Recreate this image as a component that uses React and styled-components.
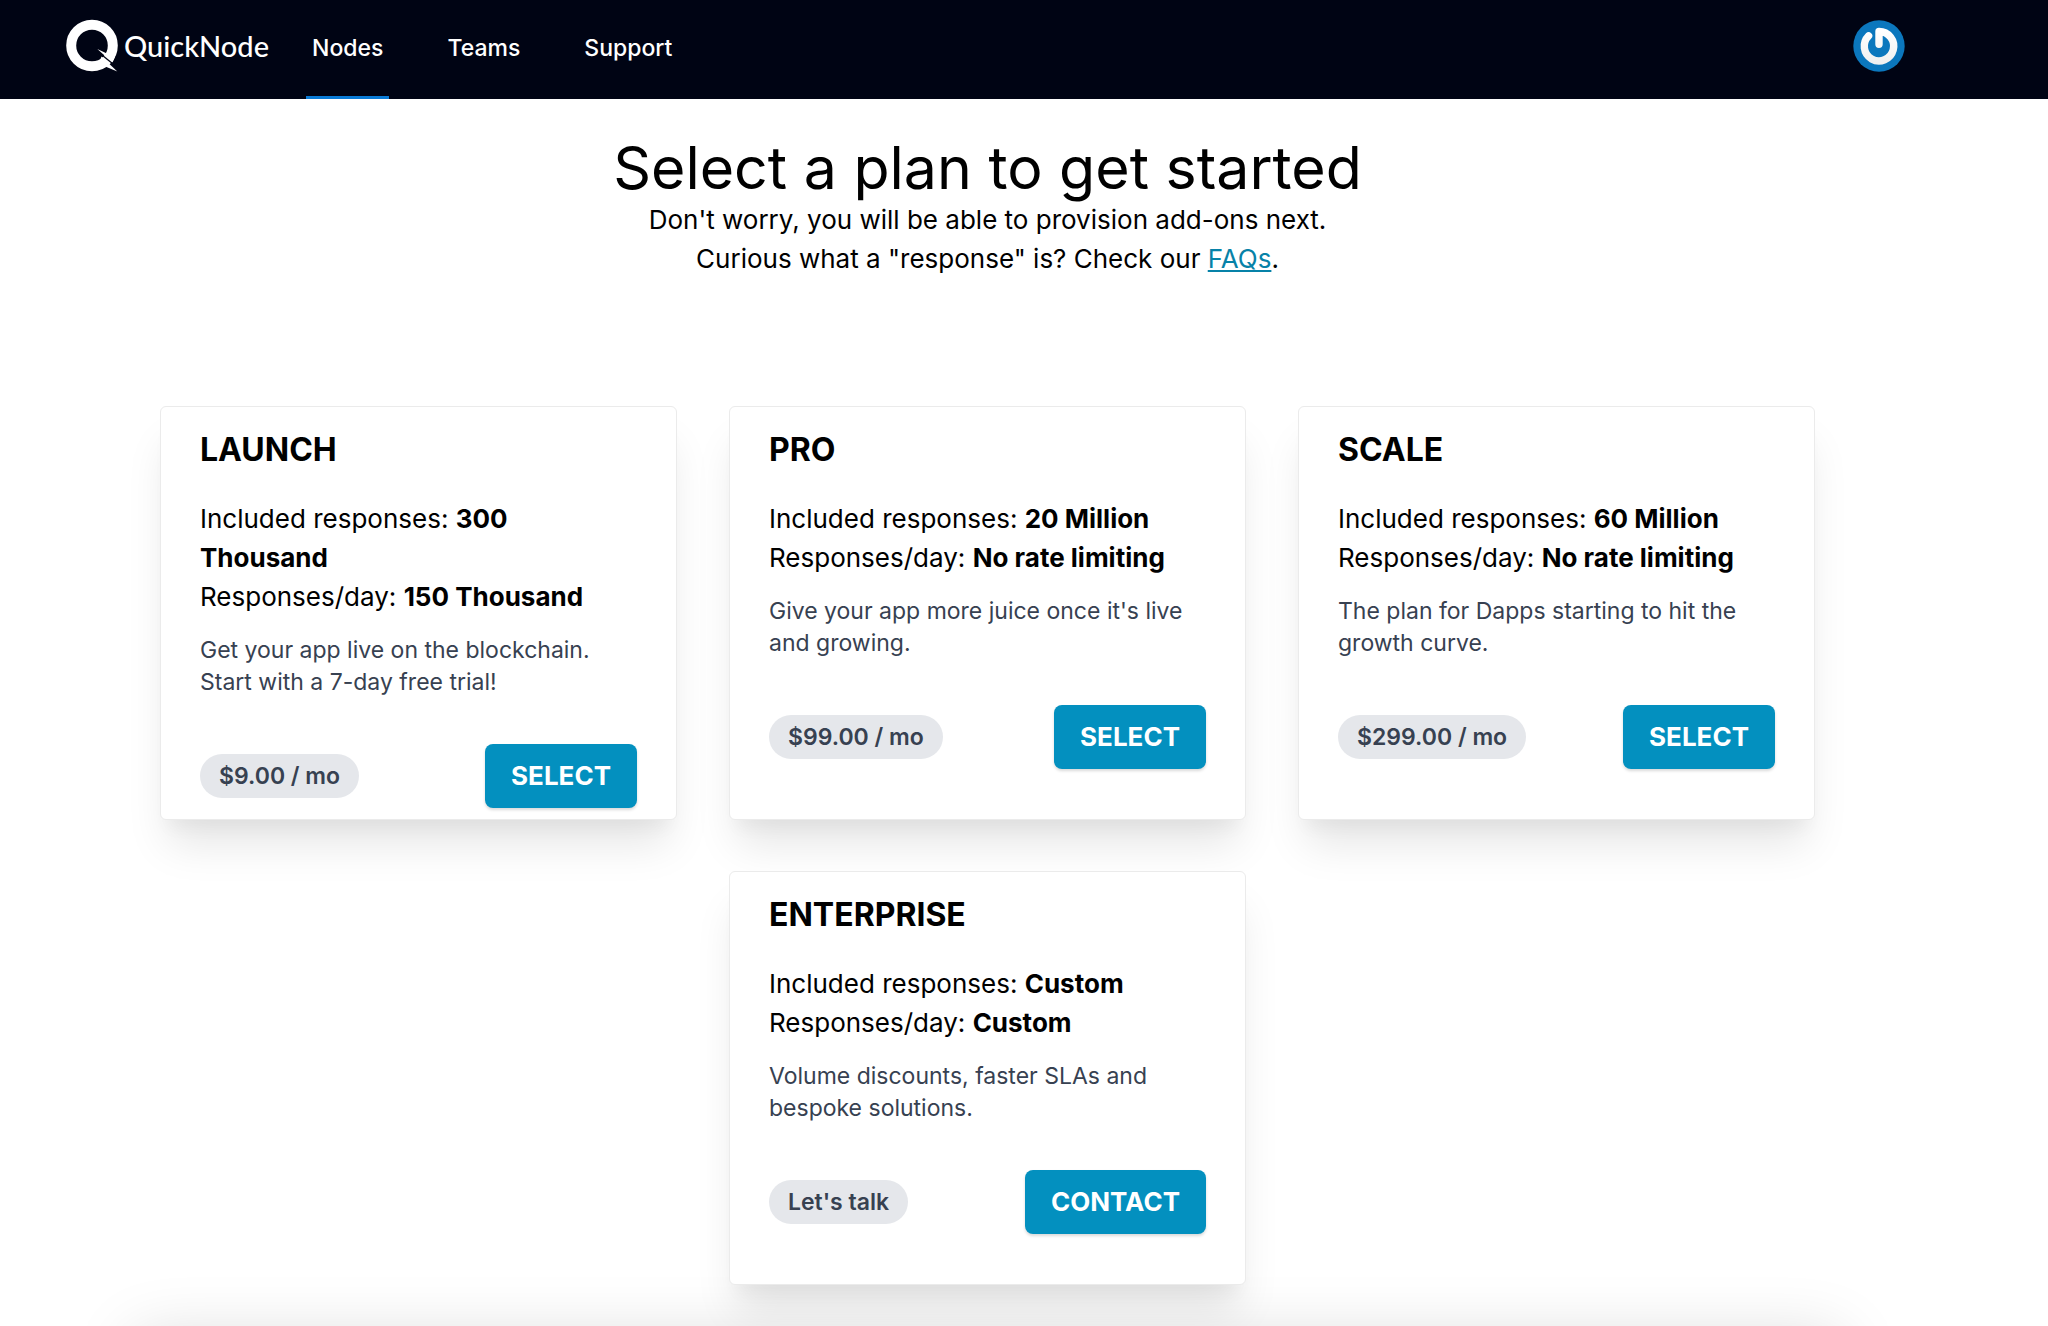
import styled, { createGlobalStyle } from "styled-components";

const plans = [
  {
    name: "LAUNCH",
    included: "300 Thousand",
    perDay: "150 Thousand",
    description: "Get your app live on the blockchain. Start with a 7-day free trial!",
    price: "$9.00 / mo",
    action: "SELECT",
  },
  {
    name: "PRO",
    included: "20 Million",
    perDay: "No rate limiting",
    description: "Give your app more juice once it's live and growing.",
    price: "$99.00 / mo",
    action: "SELECT",
  },
  {
    name: "SCALE",
    included: "60 Million",
    perDay: "No rate limiting",
    description: "The plan for Dapps starting to hit the growth curve.",
    price: "$299.00 / mo",
    action: "SELECT",
  },
  {
    name: "ENTERPRISE",
    included: "Custom",
    perDay: "Custom",
    description: "Volume discounts, faster SLAs and bespoke solutions.",
    price: "Let's talk",
    action: "CONTACT",
    centered: true,
  },
];

export default function App() {
  return (
    <>
      <GlobalStyle />
      <Shell>
        <Header>
          <Brand href="#">
            <LogoMark />
            <BrandName>QuickNode</BrandName>
          </Brand>
          <Nav>
            <NavLink href="#nodes" $active>
              Nodes
            </NavLink>
            <NavLink href="#teams">Teams</NavLink>
            <NavLink href="#support">Support</NavLink>
          </Nav>
          <AvatarButton type="button" aria-label="Account">
            <Avatar />
          </AvatarButton>
        </Header>

        <Main>
          <Intro>
            <Title>Select a plan to get started</Title>
            <Lead>Don't worry, you will be able to provision add-ons next.</Lead>
            <Lead>
              Curious what a "response" is? Check our <FaqLink href="#faqs">FAQs</FaqLink>.
            </Lead>
          </Intro>

          <Plans>
            {plans.map((plan) => (
              <Card key={plan.name} $centered={plan.centered}>
                <PlanName>{plan.name}</PlanName>
                <Limit>
                  Included responses: <strong>{plan.included}</strong>
                </Limit>
                <Limit>
                  Responses/day: <strong>{plan.perDay}</strong>
                </Limit>
                <Description>{plan.description}</Description>
                <CardFooter>
                  <Price>{plan.price}</Price>
                  <PlanButton type="button">{plan.action}</PlanButton>
                </CardFooter>
              </Card>
            ))}
          </Plans>

          <Panel />
        </Main>
      </Shell>
    </>
  );
}

function LogoMark() {
  return (
    <svg width="53" height="53" viewBox="0 0 53 53" aria-hidden="true">
      <circle cx="26" cy="26.5" r="20.800" fill="none" stroke="#fff" strokeWidth="10" />
      {/* lightning tail */}
      <path d="M31.300 30 L43 35.500 L49 38 L46.500 43.500 Z" fill="#fff" />
      <path d="M35.500 37.500 L51.300 52.500 L40.500 48 L33 44 Z" fill="#fff" />
      <path d="M35 35.300 L48 45.700" stroke="#000414" strokeWidth="1.300" />
    </svg>
  );
}

function Avatar() {
  return (
    <svg width="52" height="52" viewBox="0 0 52 52" aria-hidden="true">
      <defs>
        <linearGradient id="ring" x1="0" y1="0" x2="0" y2="1">
          <stop offset="0" stopColor="#fff" />
          <stop offset="1" stopColor="#f1f1f1" />
        </linearGradient>
      </defs>
      <circle cx="26" cy="26" r="25.700" fill="#0b77bd" />
      <path
        d="M26 24.300 V11.500 A14.700 14.700 0 1 1 15.600 15.800"
        fill="none"
        stroke="url(#ring)"
        strokeWidth="7.400"
        strokeLinecap="round"
        strokeLinejoin="round"
      />
    </svg>
  );
}

const GlobalStyle = createGlobalStyle`
  * {
    box-sizing: border-box;
    margin: 0;
  }
  body {
    background: #fff;
    color: #000;
    font-family: Inter, sans-serif;
  }
`;

const Shell = styled.div`
  display: flex;
  flex-direction: column;
  height: 100vh;
`;

const Header = styled.header`
  flex: none;
  display: flex;
  align-items: stretch;
  height: 99px;
  padding: 0 143px 0 66px;
  background: #000414;
`;

const Brand = styled.a`
  display: flex;
  align-items: center;
  gap: 5px;
  padding-bottom: 8px;
  color: #fff;
  text-decoration: none;
`;

const BrandName = styled.span`
  font-family: Lato, sans-serif;
  font-size: 29px;
  font-weight: 500;
  line-height: 36px;
`;

const Nav = styled.nav`
  display: flex;
  gap: 52px;
  margin-left: 37px;
`;

const NavLink = styled.a`
  display: flex;
  align-items: center;
  padding: 0 6px;
  border-bottom: 3px solid ${({ $active }) => ($active ? "#0a7bd6" : "transparent")};
  color: #fff;
  font-size: 23px;
  font-weight: 500;
  line-height: 32px;
  text-decoration: none;
`;

const AvatarButton = styled.button`
  display: flex;
  align-items: center;
  margin-left: auto;
  padding: 0 0 8px;
  border: none;
  background: none;
  cursor: pointer;
`;

const Main = styled.main`
  flex: 1;
  min-height: 0;
  overflow-y: auto;
  scrollbar-width: none;
  padding: 36px 233px 52px 160px;
  @media screen and (max-width: 1400px) {
    padding-inline: 40px;
  }
`;

const Intro = styled.section`
  text-align: center;
`;

const Title = styled.h1`
  font-size: 59px;
  font-weight: 400;
  line-height: 65px;
`;

const Lead = styled.p`
  font-size: 26px;
  line-height: 39px;
`;

const FaqLink = styled.a`
  color: #0782a8;
  text-decoration: underline;
`;

const Plans = styled.section`
  display: grid;
  grid-template-columns: repeat(3, 1fr);
  gap: 51px 52px;
  margin-top: 128px;
  @media screen and (max-width: 1400px) {
    grid-template-columns: 1fr;
  }
`;

const Card = styled.article`
  display: flex;
  flex-direction: column;
  min-height: 414px;
  padding: 23px 39px 11px;
  border: 1px solid #ebebeb;
  border-radius: 6px;
  background: #fff;
  box-shadow: 0 32px 40px -8px rgba(0, 0, 0, 0.1), 0 16px 16px -8px rgba(0, 0, 0, 0.04);
  grid-column: ${({ $centered }) => ($centered ? "2" : "auto")};
  @media screen and (max-width: 1400px) {
    grid-column: auto;
  }
`;

const PlanName = styled.h2`
  margin-bottom: 29px;
  font-size: 32px;
  font-weight: 700;
  line-height: 40px;
`;

const Limit = styled.p`
  font-size: 26px;
  line-height: 39px;

  strong {
    font-weight: 700;
  }
`;

const Description = styled.p`
  margin-top: 18px;
  color: #374151;
  font-size: 23px;
  line-height: 32px;
`;

const CardFooter = styled.div`
  display: flex;
  align-items: center;
  justify-content: space-between;
  margin-top: 46px;
`;

const Price = styled.span`
  padding: 6px 19px;
  border-radius: 22px;
  background: #e5e7eb;
  color: #374151;
  font-size: 23px;
  font-weight: 600;
  line-height: 32px;
`;

const PlanButton = styled.button`
  padding: 12px 26px;
  border: none;
  border-radius: 8px;
  background: #0390bf;
  box-shadow: 0 2px 3px rgba(0, 0, 0, 0.15);
  color: #fff;
  font-family: inherit;
  font-size: 26px;
  font-weight: 700;
  line-height: 40px;
  cursor: pointer;
`;

const Panel = styled.section`
  min-height: 300px;
  margin: 52px -26px 0;
  border-radius: 6px;
  background: #fff;
  box-shadow: 0 0 64px rgba(0, 0, 0, 0.15);
`;
